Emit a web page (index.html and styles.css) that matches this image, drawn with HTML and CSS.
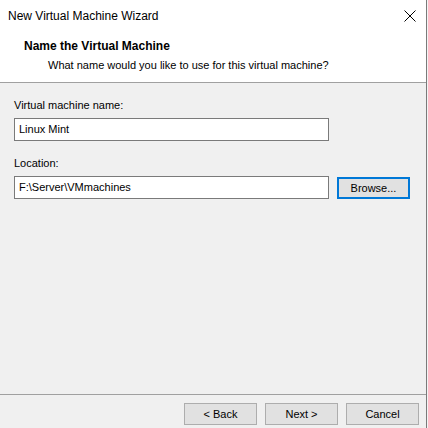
FILE: index.html
```html
<!DOCTYPE html>
<html>
<head>
<meta charset="utf-8">
<link rel="stylesheet" href="styles.css">
</head>
<body>
<div class="window">
  <div class="titlebar">
    <span class="title">New Virtual Machine Wizard</span>
    <span class="close"><svg width="12" height="12" viewBox="0 0 12 12"><path d="M0.5 0.5 L11.5 11.5 M11.5 0.5 L0.5 11.5" stroke="#000" stroke-width="1" fill="none"/></svg></span>
  </div>
  <div class="header">
    <div class="h-title">Name the Virtual Machine</div>
    <div class="h-sub">What name would you like to use for this virtual machine?</div>
  </div>
  <div class="content">
    <div class="field">
      <label class="label">Virtual machine name:</label>
      <div class="row"><div class="input">Linux Mint</div></div>
    </div>
    <div class="field">
      <label class="label">Location:</label>
      <div class="row"><div class="input">F:\Server\VMmachines</div><button class="btn focus">Browse...</button></div>
    </div>
  </div>
  <div class="footer">
    <button class="btn">&lt; Back</button>
    <button class="btn">Next &gt;</button>
    <button class="btn">Cancel</button>
  </div>
</div>
</body>
</html>
```
FILE: styles.css
```css
html, body {
  margin: 0;
  padding: 0;
  background: #f4f4f4;
}
body {
  width: 428px;
  height: 428px;
  overflow: hidden;
  font-family: "Liberation Sans", Arial, sans-serif;
  font-size: 11px;
  color: #000;
}
.window {
  width: 426px;
  height: 428px;
  border-right: 1px solid #7a7a7a;
  background: #f0f0f0;
  display: flex;
  flex-direction: column;
}
.titlebar {
  height: 31px;
  background: #fff;
  display: flex;
  align-items: center;
  justify-content: space-between;
  padding: 0 10px 1px 8px;
}
.title {
  font-size: 12px;
}
.close {
  display: flex;
  width: 12px;
  height: 12px;
  margin-top: 1px;
}
.header {
  background: #fff;
  height: 51px;
  border-bottom: 1px solid #a0a0a0;
  padding: 7px 0 0 24px;
  box-sizing: border-box;
}
.h-title {
  font-weight: bold;
  font-size: 12px;
  line-height: 14px;
}
.h-sub {
  padding-left: 24px;
  margin-top: 5px;
  line-height: 14px;
}
.content {
  flex: 1;
  padding: 15px 0 0 14px;
  display: flex;
  flex-direction: column;
  gap: 15px;
}
.field {
  display: flex;
  flex-direction: column;
  gap: 6px;
}
.label {
  line-height: 14px;
  display: block;
}
.row {
  display: flex;
  align-items: center;
  gap: 8px;
}
.input {
  height: 21px;
  background: #fff;
  border: 1px solid #7a7a7a;
  padding: 0 4px;
  line-height: 21px;
  box-sizing: content-box;
  width: 305px;
}
.btn {
  font-family: "Liberation Sans", Arial, sans-serif;
  font-size: 11px;
  color: #000;
  width: 73px;
  height: 22px;
  background: #e1e1e1;
  border: 1px solid #adadad;
  padding: 0;
  box-sizing: border-box;
}
.btn.focus {
  border: 2px solid #0078d7;
  height: 22px;
}
.footer {
  border-top: 1px solid #a0a0a0;
  height: 34px;
  display: flex;
  justify-content: flex-end;
  align-items: flex-start;
  gap: 8px;
  padding: 8px 7px 0 0;
  box-sizing: border-box;
}
```
